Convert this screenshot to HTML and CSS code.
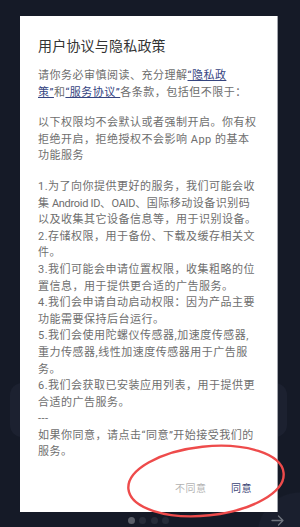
FILE: index.html
```html
<!DOCTYPE html>
<html lang="zh-CN">
<head>
<meta charset="utf-8">
<title>用户协议与隐私政策</title>
<link rel="stylesheet" href="styles.css">
</head>
<body>
<div class="screen">
  <div class="page">
    <div class="card"></div>
    <div class="footer">
      <div class="spacer"></div>
      <div class="dots">
        <span class="dot active"></span>
        <span class="dot"></span>
        <span class="dot"></span>
        <span class="dot"></span>
      </div>
      <div class="next">
        <svg width="13" height="11" viewBox="0 0 13 11" fill="none" stroke="#6f747e" stroke-width="1.3" stroke-linecap="round" stroke-linejoin="round"><path d="M1 5.5h11M7.5 1l4.5 4.5-4.5 4.5"/></svg>
      </div>
    </div>
  </div>

  <div class="dialog">
    <h1 class="title">用户协议与隐私政策</h1>
    <div class="body">
      <p>请你务必审慎阅读、充分理解<a class="link">“隐私政<br>策”</a>和<a class="link">“服务协议”</a>各条款，包括但不限于：</p>
      <p>以下权限均不会默认或者强制开启。你有权拒绝开启，拒绝授权不会影响 App 的基本功能服务</p>
      <p>1.为了向你提供更好的服务，我们可能会收集<span class="latin"> Android ID</span>、<span class="latin">OAID</span>、国际移动设备识别码以及收集其它设备信息等，用于识别设备。<br>2.存储权限，用于备份、下载及缓存相关文件。<br>3.我们可能会申请位置权限，收集粗略的位置信息，用于提供更合适的广告服务。<br>4.我们会申请自动启动权限：因为产品主要功能需要保持后台运行。<br>5.我们会使用陀螺仪传感器,加速度传感器,重力传感器,线性加速度传感器用于广告服务。<br>6.我们会获取已安装应用列表，用于提供更合适的广告服务。<br>---<br>如果你同意，请点击“同意”开始接受我们的服务。</p>
    </div>
    <div class="actions">
      <span class="btn btn-decline">不同意</span>
      <span class="btn btn-accept">同意</span>
    </div>
  </div>

  <svg class="circle-mark" width="300" height="527" viewBox="0 0 300 527">
    <ellipse cx="206" cy="481" rx="78" ry="34.5" transform="rotate(-6 206 481)" fill="none" stroke="#ee4b4b" stroke-width="2.4"/>
  </svg>
</div>
</body>
</html>
```

FILE: styles.css
```css
html, body {
  margin: 0;
  padding: 0;
}
body {
  font-family: Roboto, "Noto Sans CJK SC", sans-serif;
}
.screen {
  position: relative;
  width: 300px;
  height: 527px;
  overflow: hidden;
  background:
    radial-gradient(circle 43px at 300px 535px, #1a1f2e 97%, rgba(26,31,46,0) 100%),
    #151a27;
}
.page {
  box-sizing: border-box;
  height: 100%;
  display: flex;
  flex-direction: column;
  padding: 383px 13px 0 10px;
}
.card {
  height: 54px;
  border-radius: 12px;
  background: #1c2130;
}
.footer {
  margin-top: auto;
  height: 14px;
  display: grid;
  grid-template-columns: 1fr auto 1fr;
  align-items: center;
}
.dots {
  display: flex;
  gap: 4.5px;
}
.dot {
  width: 7px;
  height: 7px;
  border-radius: 50%;
  background: #262b38;
}
.dot.active {
  background: #5a5e68;
}
.next {
  justify-self: end;
  display: flex;
  margin-right: 3px;
}
.dialog {
  position: absolute;
  left: 20px;
  top: 16px;
  width: 257px;
  height: 496px;
  box-sizing: border-box;
  background: #fff;
  box-shadow: 1px 0 0 #a3a6ad;
  padding: 20px 20px 0 18px;
  display: flex;
  flex-direction: column;
}
.title {
  margin: 0 0 12px 0;
  font-size: 14px;
  line-height: 20px;
  font-weight: normal;
  color: #333;
  letter-spacing: 0.2px;
}
.body {
  font-size: 11px;
  letter-spacing: 0.5px;
  line-height: 16.6px;
  color: #6e6e6e;
}
.body p {
  margin: 0 0 14px 0;
}
.body p:last-child {
  margin-bottom: 0;
}
.latin {
  letter-spacing: -0.3px;
}
.link {
  color: #35447f;
  text-decoration: underline;
}
.actions {
  display: flex;
  justify-content: flex-end;
  gap: 8.5px;
  margin-top: 18px;
  margin-right: -3px;
}
.btn {
  font-size: 10px;
  letter-spacing: 0.5px;
  line-height: 20px;
  padding: 0 8px;
}
.btn-decline {
  color: #b3b3b3;
}
.btn-accept {
  color: #3a4374;
}
.circle-mark {
  position: absolute;
  left: 0;
  top: 0;
  pointer-events: none;
}
```
